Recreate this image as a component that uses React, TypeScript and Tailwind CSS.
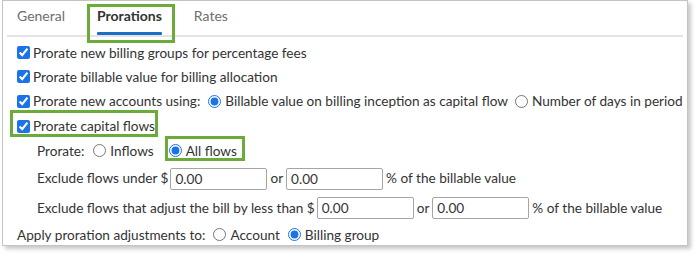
import React from "react";

const Num = () => (
  <input
    readOnly
    value="0.00"
    className="flex-none w-[97px] h-[22px] border border-[#a5a5a5] rounded-[2px] px-[4px] text-[13.6px] text-[#333] outline-none bg-white"
    style={{ fontFamily: "Lato, sans-serif" }}
  />
);

const Check = ({ label }: { label: string }) => (
  <label className="flex items-center flex-none whitespace-nowrap">
    <input type="checkbox" defaultChecked className="w-[13px] h-[13px] ml-[4px] mr-[3px] accent-[#1a73e8]" />
    <span>{label}</span>
  </label>
);

const Radio = ({ label, checked, name }: { label: string; checked?: boolean; name: string }) => (
  <label className="flex items-center flex-none whitespace-nowrap">
    <input type="radio" name={name} defaultChecked={checked} className="w-[13px] h-[13px] ml-[5px] mr-[4px] accent-[#1a73e8]" />
    <span>{label}</span>
  </label>
);

const T = ({ children, cls = "" }: { children: React.ReactNode; cls?: string }) => (
  <span className={`flex-none whitespace-nowrap ${cls}`}>{children}</span>
);

export default function App() {
  return (
    <div className="relative w-[697px] h-[257px] bg-white text-[13.6px] text-[#333]" style={{ fontFamily: "Lato, sans-serif" }}>
      <div className="ml-[2px] w-[686px] h-[246px] border border-[#c4c4c4] shadow-[3px_3px_4px_rgba(0,0,0,0.22)] bg-white">
        <div className="mx-[4px] h-[36px] border-b-2 border-[#e3e3e3] flex items-end pl-[10px] gap-[32px] text-[14px]">
          <div className="h-[35px] flex flex-col justify-between pt-[5px] text-[#6e6e6e]">
            <span>General</span>
            <span className="h-[3px]" />
          </div>
          <div className="h-[35px] flex flex-col justify-between pt-[5px] font-bold text-[#333]">
            <span>Prorations</span>
            <span className="h-[3px] bg-[#1a6fc4] rounded-[1px]" />
          </div>
          <div className="h-[35px] flex flex-col justify-between pt-[5px] text-[#6e6e6e]">
            <span>Rates</span>
            <span className="h-[3px]" />
          </div>
        </div>
        <div className="pl-[10px] pt-[4px]">
          <div className="h-[24px] flex items-center"><Check label="Prorate new billing groups for percentage fees" /></div>
          <div className="h-[24px] flex items-center"><Check label="Prorate billable value for billing allocation" /></div>
          <div className="h-[25px] flex items-center">
            <Check label="Prorate new accounts using:" />
            <span className="w-[3px] flex-none" />
            <Radio name="acc" checked label="Billable value on billing inception as capital flow" />
            <span className="w-[2px] flex-none" />
            <Radio name="acc" label="Number of days in period" />
          </div>
          <div className="h-[25px] flex items-center"><Check label="Prorate capital flows" /></div>
          <div className="h-[24px] flex items-center pl-[24px]">
            <T>Prorate:</T>
            <span className="w-[4px] flex-none" />
            <Radio name="pr" label="Inflows" />
            <span className="w-[10px] flex-none" />
            <Radio name="pr" checked label="All flows" />
          </div>
          <div className="h-[31px] flex items-center pl-[24px]">
            <T cls="mr-[2px]">Exclude flows under $</T>
            <Num />
            <T cls="mx-[3px]">or</T>
            <Num />
            <T cls="ml-[3px]">% of the billable value</T>
          </div>
          <div className="h-[28px] flex items-center pl-[24px]">
            <T cls="mr-[2px]">Exclude flows that adjust the bill by less than $</T>
            <Num />
            <T cls="mx-[3px]">or</T>
            <Num />
            <T cls="ml-[3px]">% of the billable value</T>
          </div>
          <div className="h-[26px] flex items-center pl-[4px]">
            <T>Apply proration adjustments to:</T>
            <span className="w-[3px] flex-none" />
            <Radio name="ap" label="Account" />
            <span className="w-[3px] flex-none" />
            <Radio name="ap" checked label="Billing group" />
          </div>
        </div>
      </div>
      <div className="absolute left-[87px] top-[4px] w-[88px] h-[39px] border-[3px] border-[#6aab3a]" />
      <div className="absolute left-[10px] top-[110px] w-[148px] h-[27px] border-[3px] border-[#6aab3a]" />
      <div className="absolute left-[165px] top-[136px] w-[80px] h-[25px] border-[3px] border-[#6aab3a]" />
    </div>
  );
}
